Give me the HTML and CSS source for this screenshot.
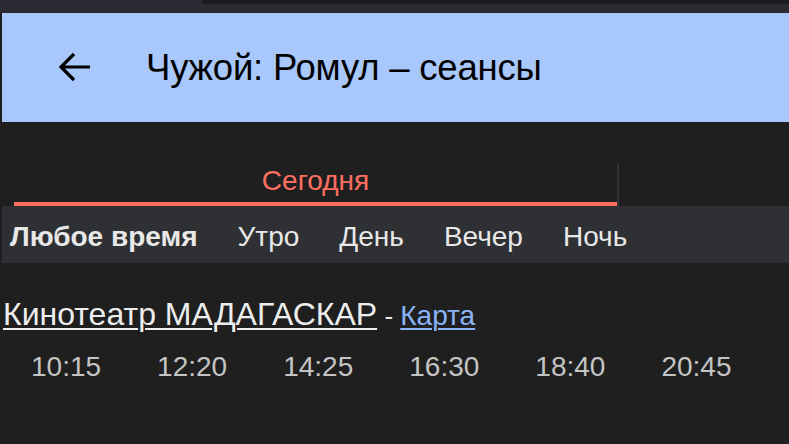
FILE: index.html
```html
<!DOCTYPE html>
<html lang="ru">
<head>
<meta charset="utf-8">
<link rel="stylesheet" href="styles.css">
</head>
<body>
<div class="chrome">
  <div class="chrome-gap"></div>
  <div class="chrome-tab"></div>
</div>
<header class="appbar">
  <button class="back" aria-label="Назад">
    <svg width="34" height="34" viewBox="0 0 34 34"><path d="M32 16H5M16 3 3 16l13 13" fill="none" stroke="#000" stroke-width="3.2"/></svg>
  </button>
  <h1 class="title">Чужой: Ромул – сеансы</h1>
</header>
<nav class="tabs">
  <div class="tab active">Сегодня</div>
  <div class="tab-divider"></div>
</nav>
<div class="filters">
  <span class="filter selected">Любое время</span>
  <span class="filter">Утро</span>
  <span class="filter">День</span>
  <span class="filter">Вечер</span>
  <span class="filter">Ночь</span>
</div>
<section class="cinema">
  <div class="cinema-line"><a class="cinema-name" href="#">Кинотеатр МАДАГАСКАР</a><span class="sep"> - </span><a class="map" href="#">Карта</a></div>
  <div class="times">
    <span class="time">10:15</span>
    <span class="time">12:20</span>
    <span class="time">14:25</span>
    <span class="time">16:30</span>
    <span class="time">18:40</span>
    <span class="time">20:45</span>
  </div>
</section>
</body>
</html>
```
FILE: styles.css
```css
* { box-sizing: border-box; }
html, body { margin: 0; padding: 0; }
body {
  background: #1f1f1f;
  font-family: "Liberation Sans", Arial, sans-serif;
  width: 789px;
  height: 444px;
  overflow: hidden;
}
.chrome {
  height: 13px;
  background: #2b2a33;
  display: flex;
  align-items: flex-start;
}
.chrome-gap { width: 202px; }
.chrome-tab {
  flex: 1;
  height: 4px;
  background: #1c1b22;
  border-bottom-left-radius: 6px;
}
.appbar {
  margin-left: 2px;
  height: 109px;
  background: #a8c7fa;
  display: flex;
  align-items: center;
}
.back {
  margin-left: 56px;
  width: 34px;
  height: 34px;
  padding: 0;
  border: 0;
  background: none;
  display: flex;
}
.title {
  margin: 0 0 0 54px;
  font-weight: normal;
  font-size: 36.5px;
  color: #000;
  letter-spacing: -0.2px;
}
.tabs {
  margin-top: 42px;
  height: 42px;
  display: flex;
  padding-left: 14px;
}
.tab {
  width: 603px;
  height: 42px;
  text-align: center;
  font-size: 28px;
  line-height: 34px;
  color: #ff6f61;
  border-bottom: 4px solid #ff6f61;
}
.tab-divider {
  width: 2px;
  background: #333335;
}
.filters {
  margin-left: 2px;
  height: 57px;
  background: #2f3033;
  display: flex;
  align-items: center;
  gap: 40px;
  padding-left: 8px;
  padding-top: 4px;
}
.filter {
  font-size: 28px;
  color: #e8e8e8;
}
.filter.selected { font-weight: bold; }
.cinema {
  padding: 33px 0 0 3px;
}
.cinema-line {
  font-size: 32px;
  line-height: 36px;
  color: #e8e8e8;
}
.cinema-name {
  color: #eeeeee;
  text-decoration: underline;
  text-decoration-thickness: 2px;
  text-underline-offset: 3px;
}
.sep { font-size: 26px; color: #e8e8e8; }
.map {
  font-size: 28px;
  color: #8ab4f8;
  text-decoration: underline;
  text-decoration-thickness: 2px;
  text-underline-offset: 3px;
}
.times {
  display: flex;
  gap: 56px;
  padding-left: 28px;
  margin-top: 17px;
}
.time {
  font-size: 28px;
  color: #c4c4c4;
}
```
